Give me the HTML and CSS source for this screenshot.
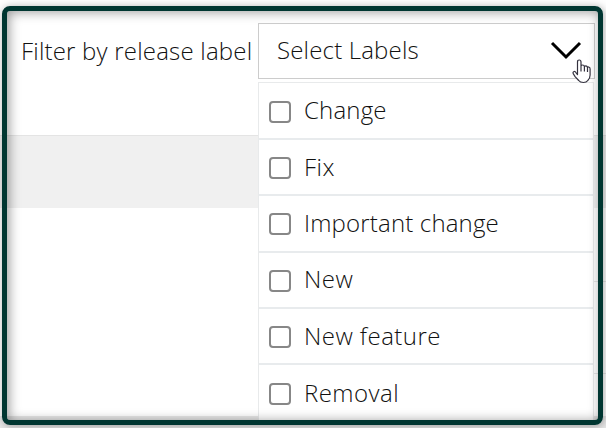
FILE: index.html
```
<!DOCTYPE html>
<html lang="en">
<head>
    <meta charset="UTF-8">
    <meta name="viewport" content="width=device-width, initial-scale=1.0">
    <title>Release label filter</title>
    <link rel="stylesheet" href="styles.css">
</head>
<body>
    <div class="page">
        <div class="filter">
            <span class="filter-title">Filter by release label</span>
            <div class="dropdown">
                <div class="select">
                    <span class="select-text">Select Labels</span>
                    <svg class="chevron" width="32" height="20" viewBox="0 0 32 20">
                        <path d="M2 2 L16 16 L30 2" fill="none" stroke="#000" stroke-width="3"/>
                    </svg>
                </div>
                <div class="options">
                    <label class="option"><input type="checkbox"><span>Change</span></label>
                    <label class="option"><input type="checkbox"><span class="wide">Fix</span></label>
                    <label class="option"><input type="checkbox"><span>Important change</span></label>
                    <label class="option"><input type="checkbox"><span class="wide">New</span></label>
                    <label class="option"><input type="checkbox"><span class="wide">New feature</span></label>
                    <label class="option"><input type="checkbox"><span class="wide">Removal</span></label>
                </div>
            </div>
        </div>
        <div class="frame"></div>
        <svg class="pointer" width="20" height="26" viewBox="0 0 20 26">
            <path d="M5.5 15.5 V3 Q5.5 1 7.2 1 Q9 1 9 3 V7.3 Q9 6 10.6 6 Q12.3 6 12.4 7.8 Q12.6 6.7 14 6.8 Q15.4 7 15.5 8.7 Q15.8 7.8 16.8 8 Q18.1 8.2 18.1 10 V16 Q18.1 19.5 15.8 21.5 Q14.5 23.5 11.5 23.5 Q8 23.5 6.7 21.5 L3.3 17.8 L1.2 14.6 Q0.6 13 2.1 12.5 Q3.2 12.3 4.1 13.8 Z M9 7.3 V12.5 M12.4 7.8 V12.5 M15.5 8.7 V13" fill="#fff" stroke="#34323f" stroke-width="1.2" stroke-linejoin="round"/>
        </svg>
    </div>
</body>
</html>
```
FILE: styles.css
```
body {
    margin: 0;
    font-family: 'Open Sans', sans-serif;
    font-weight: 300;
    font-size: 24px;
    letter-spacing: 0.17px;
    color: #111;
}

.page {
    position: relative;
    width: 606px;
    height: 428px;
    box-sizing: border-box;
    padding: 23px 11px 0 21px;
    overflow: hidden;
    background: linear-gradient(#fff 135px, #e4e4e4 135px, #e4e4e4 136px, #f0f0f0 136px, #f0f0f0 208px, #fff 208px, #fff 281px, #e6e6e6 281px, #e6e6e6 282px, #fff 282px, #fff 373px, #e6e6e6 373px, #e6e6e6 374px, #fff 374px, #fff 416px, #e8e8e8 416px);
}

/* the stripes of the table stop short of the open list */
.page::before {
    content: "";
    position: absolute;
    top: 208px;
    left: 0;
    width: 258px;
    height: 208px;
    background: #fff;
}

.filter {
    position: relative;
    display: flex;
    justify-content: space-between;
    white-space: nowrap;
}

.filter-title {
    height: 56px;
    line-height: 56px;
    letter-spacing: 0.2px;
}

.dropdown {
    width: 337px;
}

.select {
    display: flex;
    align-items: center;
    justify-content: space-between;
    box-sizing: border-box;
    height: 56px;
    padding: 0 12px 0 18px;
    border: 1px solid #ccc;
    background: #fff;
}

.select-text {
    line-height: 52px;
    padding-bottom: 2px;
}

.options {
    width: 336px;
    margin-top: 3px;
    border: 1px solid #e8eaeb;
    border-bottom: none;
    box-sizing: border-box;
    background: #fff;
}

.option {
    display: flex;
    align-items: center;
    gap: 13px;
    box-sizing: border-box;
    height: 56.3px;
    padding-left: 10px;
    border-bottom: 2px solid #e8ebed;
}

.option:first-child {
    height: 57px;
}

.option:last-child {
    border-bottom: none;
}

.option span {
    margin-top: -2px;
}

.option .wide {
    letter-spacing: 0.45px;
}

.option input {
    appearance: none;
    width: 22px;
    height: 22px;
    margin: 2px 0 0;
    border: 2px solid #878787;
    border-radius: 4px;
    background: #fff;
}

.frame {
    position: absolute;
    top: 6px;
    left: 2px;
    width: 601px;
    height: 419px;
    box-sizing: border-box;
    border: 5px solid #003631;
    border-radius: 8px;
    box-shadow: 1px 1px 8px rgba(0, 0, 0, 0.35), inset 2px 1px 12px rgba(0, 0, 0, 0.4);
}

.pointer {
    position: absolute;
    top: 59px;
    left: 572px;
}
```
